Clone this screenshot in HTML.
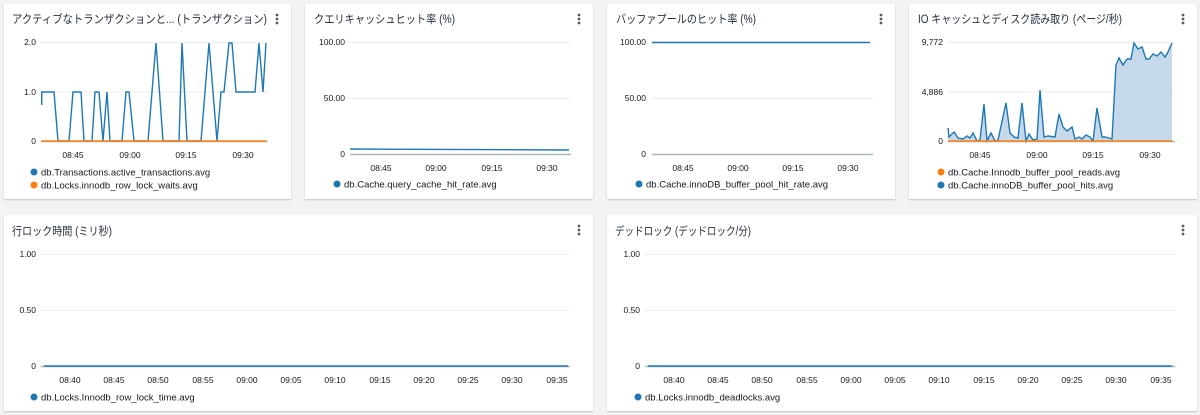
<!DOCTYPE html>
<html><head><meta charset="utf-8"><style>
html,body{margin:0;padding:0;background:#f2f3f3;width:1200px;height:415px;overflow:hidden}
svg{display:block}
text{font-family:"Liberation Sans","Noto Sans CJK JP",sans-serif}
.t{font-size:11.5px;fill:#232f3e}
.a{font-size:8.5px;fill:#16191f}
.l{font-size:9.5px;fill:#16191f}
.g{stroke:#eaeded;stroke-width:1}
.ax{stroke:#aab7b8;stroke-width:1.5}
.bl{fill:none;stroke:#1f77b4;stroke-width:1.4}
.or{stroke:#ff7f0e;stroke-width:1.5}
.dk{fill:#545b64}
</style></head><body>
<svg width="1200" height="415" viewBox="0 0 1200 415">
<defs><filter id="s" x="-5%" y="-5%" width="110%" height="110%"><feDropShadow dx="0" dy="1" stdDeviation="0.8" flood-color="#000" flood-opacity="0.2"/></filter>
<g id="dots"><circle cx="0" cy="0" r="1.4"/><circle cx="0" cy="4" r="1.4"/><circle cx="0" cy="8" r="1.4"/></g></defs>
<g fill="#fff" filter="url(#s)">
<rect x="4" y="4" width="287" height="195"/>
<rect x="305" y="4" width="288" height="195"/>
<rect x="607" y="4" width="288" height="195"/>
<rect x="909" y="4" width="288" height="195"/>
<rect x="4" y="215" width="589" height="196"/>
<rect x="607" y="215" width="590" height="196"/>
</g>
<!-- Panel 1 -->
<text class="t" x="12" y="23" textLength="255" lengthAdjust="spacingAndGlyphs">アクティブなトランザクションと... (トランザクション)</text>
<use href="#dots" x="277" y="15" class="dk"/>
<line class="g" x1="41" y1="42.5" x2="268" y2="42.5"/><line class="g" x1="41" y1="92" x2="268" y2="92"/>
<line class="ax" x1="41" y1="141.5" x2="268" y2="141.5"/>
<g class="a" text-anchor="end"><text x="36" y="45">2.0</text><text x="36" y="95">1.0</text><text x="36" y="144">0</text></g>
<g class="a" text-anchor="middle"><text x="73" y="158">08:45</text><text x="130" y="158">09:00</text><text x="186" y="158">09:15</text><text x="243" y="158">09:30</text></g>
<polyline class="bl" points="41.7,105 41.7,92 54,92 58,141 69,141 73,92 81,92 84,141 92,141 95,92 99,92 103,141 107,92 110,141 122,141 126,92 129,92 134,141 148,141 156,43 163,141 179,141 182,43 187,141 201,141 209,43 217,141 221,92 224,92 229,43 232,43 236,92 255,92 259,43 263,92 266,43"/>
<line class="or" x1="41" y1="141" x2="266" y2="141"/>
<circle cx="34" cy="172" r="3.5" fill="#1f77b4"/><text class="l" x="41" y="175.5">db.Transactions.active_transactions.avg</text>
<circle cx="34" cy="185" r="3.5" fill="#ff7f0e"/><text class="l" x="41" y="188.5">db.Locks.innodb_row_lock_waits.avg</text>
<!-- Panel 2 -->
<text class="t" x="314" y="23" textLength="141" lengthAdjust="spacingAndGlyphs">クエリキャッシュヒット率 (%)</text>
<use href="#dots" x="579" y="15" class="dk"/>
<line class="g" x1="350" y1="42.5" x2="571" y2="42.5"/><line class="g" x1="350" y1="98.5" x2="571" y2="98.5"/>
<line class="ax" x1="350" y1="154.5" x2="571" y2="154.5"/>
<g class="a" text-anchor="end"><text x="345" y="45">100.00</text><text x="345" y="101">50.00</text><text x="345" y="157">0</text></g>
<g class="a" text-anchor="middle"><text x="381" y="171">08:45</text><text x="436" y="171">09:00</text><text x="492" y="171">09:15</text><text x="547" y="171">09:30</text></g>
<line class="bl" x1="350" y1="149" x2="569" y2="150"/>
<circle cx="337" cy="184" r="3.5" fill="#1f77b4"/><text class="l" x="344" y="187.5">db.Cache.query_cache_hit_rate.avg</text>
<!-- Panel 3 -->
<text class="t" x="616" y="23" textLength="140" lengthAdjust="spacingAndGlyphs">バッファプールのヒット率 (%)</text>
<use href="#dots" x="881" y="15" class="dk"/>
<line class="g" x1="652" y1="42.5" x2="873" y2="42.5"/><line class="g" x1="652" y1="98.5" x2="873" y2="98.5"/>
<line class="ax" x1="652" y1="154.5" x2="873" y2="154.5"/>
<g class="a" text-anchor="end"><text x="646" y="45">100.00</text><text x="646" y="101">50.00</text><text x="646" y="157">0</text></g>
<g class="a" text-anchor="middle"><text x="683" y="171">08:45</text><text x="738" y="171">09:00</text><text x="793" y="171">09:15</text><text x="848" y="171">09:30</text></g>
<line class="bl" x1="652" y1="42.5" x2="870" y2="42.5"/>
<circle cx="639" cy="184" r="3.5" fill="#1f77b4"/><text class="l" x="646" y="187.5">db.Cache.innoDB_buffer_pool_hit_rate.avg</text>
<!-- Panel 4 -->
<text class="t" x="918" y="23" textLength="204" lengthAdjust="spacingAndGlyphs">IO キャッシュとディスク読み取り (ページ/秒)</text>
<use href="#dots" x="1183" y="15" class="dk"/>
<line class="g" x1="948" y1="42.5" x2="1175" y2="42.5"/><line class="g" x1="948" y1="92" x2="1175" y2="92"/>
<line class="ax" x1="948" y1="141.5" x2="1175" y2="141.5"/>
<g class="a" text-anchor="end"><text x="943" y="45">9,772</text><text x="943" y="95">4,886</text><text x="943" y="144">0</text></g>
<g class="a" text-anchor="middle"><text x="980" y="158">08:45</text><text x="1037" y="158">09:00</text><text x="1093" y="158">09:15</text><text x="1150" y="158">09:30</text></g>
<polygon fill="#c5d9ea" points="948,141 948,128 949,137 954,132 958,138 963,139 967,136 970,138 973,133 977,141 980,140 984,104 987,141 991,133 995,141 998,140 1006,103 1010,133 1014,137 1018,138 1022,103 1026,141 1029,134 1033,140 1037,139 1040,90 1044,137 1048,136 1055,137 1059,114 1063,127 1067,131 1072,127 1075,139 1079,137 1082,139 1086,135 1090,137 1093,141 1097,108 1102,137 1105,137 1112,139 1116,65 1119,58 1123,65 1127,59 1131,59 1134,43 1138,49 1142,47 1146,59 1149,59 1153,54 1157,56 1161,52 1165,57 1168,52 1172,43 1172,141"/>
<polyline class="bl" points="948,128 949,137 954,132 958,138 963,139 967,136 970,138 973,133 977,141 980,140 984,104 987,141 991,133 995,141 998,140 1006,103 1010,133 1014,137 1018,138 1022,103 1026,141 1029,134 1033,140 1037,139 1040,90 1044,137 1048,136 1055,137 1059,114 1063,127 1067,131 1072,127 1075,139 1079,137 1082,139 1086,135 1090,137 1093,141 1097,108 1102,137 1105,137 1112,139 1116,65 1119,58 1123,65 1127,59 1131,59 1134,43 1138,49 1142,47 1146,59 1149,59 1153,54 1157,56 1161,52 1165,57 1168,52 1172,43"/>
<line class="or" x1="948" y1="141" x2="1172" y2="141"/>
<circle cx="941" cy="172" r="3.5" fill="#ff7f0e"/><text class="l" x="948" y="175.5">db.Cache.Innodb_buffer_pool_reads.avg</text>
<circle cx="941" cy="185" r="3.5" fill="#1f77b4"/><text class="l" x="948" y="188.5">db.Cache.innoDB_buffer_pool_hits.avg</text>
<!-- Panel 5 -->
<text class="t" x="12" y="235" textLength="100" lengthAdjust="spacingAndGlyphs">行ロック時間 (ミリ秒)</text>
<use href="#dots" x="579" y="226" class="dk"/>
<line class="g" x1="41" y1="254.5" x2="570" y2="254.5"/><line class="g" x1="41" y1="310.5" x2="570" y2="310.5"/>
<line class="ax" x1="41" y1="366.5" x2="570" y2="366.5"/>
<g class="a" text-anchor="end"><text x="36" y="257">1.00</text><text x="36" y="313">0.50</text><text x="36" y="369">0</text></g>
<g class="a" text-anchor="middle"><text x="70" y="383">08:40</text><text x="114" y="383">08:45</text><text x="158" y="383">08:50</text><text x="203" y="383">08:55</text><text x="247" y="383">09:00</text><text x="291" y="383">09:05</text><text x="335" y="383">09:10</text><text x="380" y="383">09:15</text><text x="424" y="383">09:20</text><text x="468" y="383">09:25</text><text x="512" y="383">09:30</text><text x="557" y="383">09:35</text></g>
<line class="bl" x1="44" y1="366" x2="568" y2="366"/>
<circle cx="34" cy="397" r="3.5" fill="#1f77b4"/><text class="l" x="41" y="400.5">db.Locks.Innodb_row_lock_time.avg</text>
<!-- Panel 6 -->
<text class="t" x="615" y="235" textLength="136" lengthAdjust="spacingAndGlyphs">デッドロック (デッドロック/分)</text>
<use href="#dots" x="1183" y="226" class="dk"/>
<line class="g" x1="645" y1="254.5" x2="1175" y2="254.5"/><line class="g" x1="645" y1="310.5" x2="1175" y2="310.5"/>
<line class="ax" x1="645" y1="366.5" x2="1175" y2="366.5"/>
<g class="a" text-anchor="end"><text x="640" y="257">1.00</text><text x="640" y="313">0.50</text><text x="640" y="369">0</text></g>
<g class="a" text-anchor="middle"><text x="674" y="383">08:40</text><text x="718" y="383">08:45</text><text x="762" y="383">08:50</text><text x="807" y="383">08:55</text><text x="851" y="383">09:00</text><text x="895" y="383">09:05</text><text x="939" y="383">09:10</text><text x="984" y="383">09:15</text><text x="1028" y="383">09:20</text><text x="1072" y="383">09:25</text><text x="1116" y="383">09:30</text><text x="1161" y="383">09:35</text></g>
<line class="bl" x1="648" y1="366" x2="1172" y2="366"/>
<circle cx="638" cy="397" r="3.5" fill="#1f77b4"/><text class="l" x="645" y="400.5">db.Locks.innodb_deadlocks.avg</text>
</svg>
</body></html>
